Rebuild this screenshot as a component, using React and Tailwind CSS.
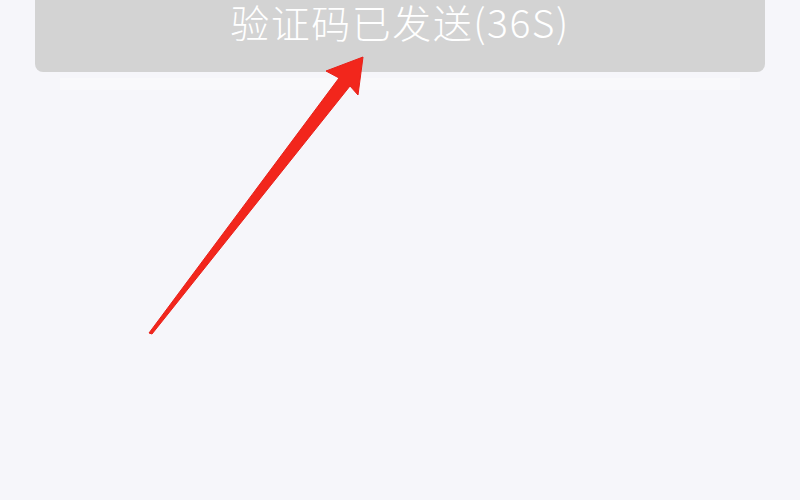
import React from "react";

const SentArrow = () => (
  <svg
    className="absolute left-0 top-0 pointer-events-none"
    width="800"
    height="500"
    viewBox="0 0 800 500"
  >
    <polygon
      points="363,57 326,71 339,78 149,333 152,334 350,86 358,95"
      fill="#f2261c"
      stroke="#e8211a"
      strokeWidth="1"
      strokeLinejoin="round"
    />
  </svg>
);

export default function App() {
  return (
    <div
      className="relative w-[800px] h-[500px] overflow-hidden bg-[#f6f6fa]"
      style={{ fontFamily: '"Noto Sans CJK SC", "Noto Sans", sans-serif' }}
    >
      <div className="px-[35px]">
        <button className="-mt-[30px] h-[102px] w-full rounded-lg bg-[#d3d3d3] flex items-center justify-center text-white text-[39px] leading-none font-light tracking-[1.5px]">
          验证码已发送(36S)
        </button>
      </div>
      <div className="mx-[60px] mt-[6px] h-[12px] bg-white/30" />
      <SentArrow />
    </div>
  );
}
